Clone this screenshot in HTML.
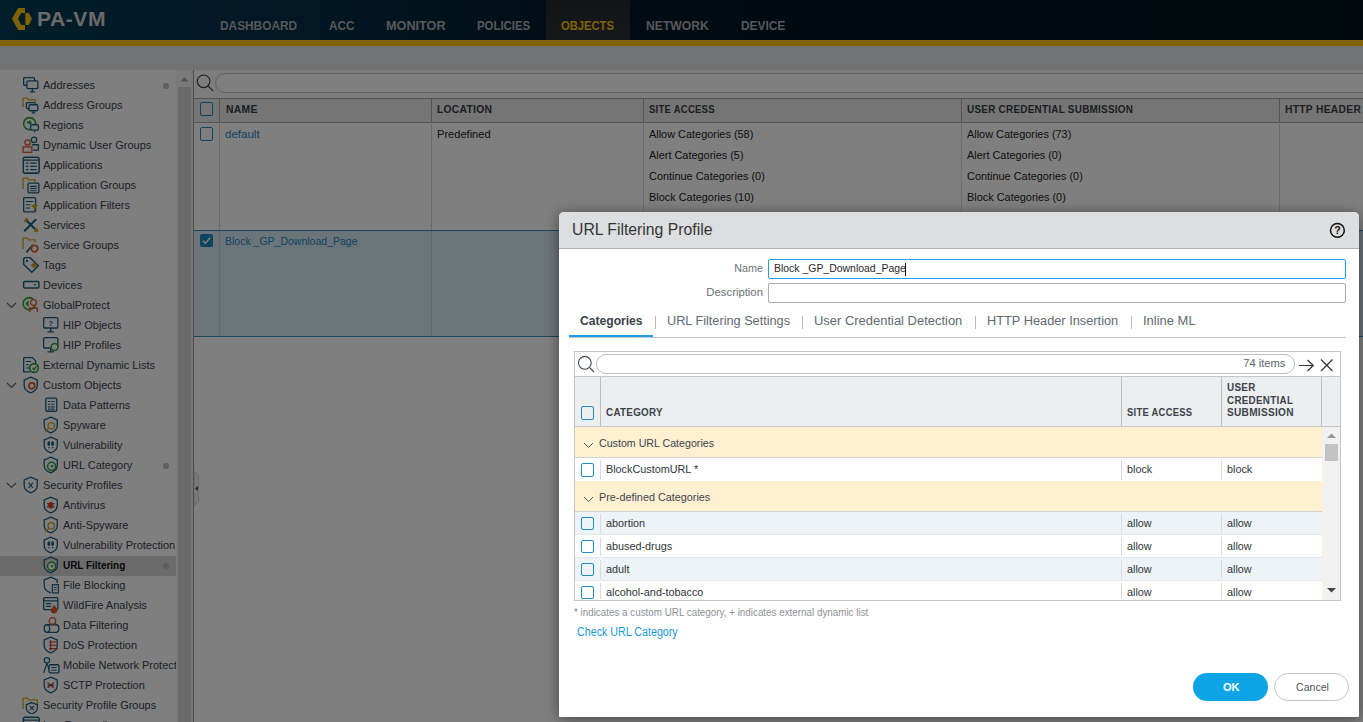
<!DOCTYPE html>
<html><head><meta charset="utf-8">
<style>
*{box-sizing:border-box;margin:0;padding:0}
html,body{width:1363px;height:722px;overflow:hidden;background:#fff;font-family:"Liberation Sans",sans-serif;color:#333;position:relative}
.abs{position:absolute}
.t{position:absolute;white-space:nowrap}
</style></head><body>
<div class="abs" style="left:0px;top:0px;width:1363px;height:40px;background:linear-gradient(90deg,#053a56 0%,#042d48 22%,#021a2a 42%,#011320 62%,#01111b 100%);"></div>
<div class="abs" style="left:546px;top:0px;width:84px;height:40px;background:linear-gradient(180deg,#252b31,#2c3238);"></div>
<svg class="abs" style="left:8px;top:4px" width="30" height="30" viewBox="0 0 30 30"><path d="M10.2 3.9H17v5H13.2L10 14.7l3.2 6.3H17v5H10.2L3.9 14.7z" fill="#ffc500"/><path d="M17.3 8.9h3.5l3.1 5.8-3.1 6.3h-3.5z" fill="#ffc500"/></svg>
<div class="t" style="left:37px;top:9.37px;font-size:20px;line-height:20px;font-weight:bold;color:#d4d4d4;letter-spacing:0.5px;transform:scaleX(1.0539);transform-origin:left top;">PA-VM</div>
<div class="t" style="left:220.2px;top:19.56px;font-size:12.8px;line-height:12.8px;font-weight:bold;color:#aeb1b5;transform:scaleX(0.9268);transform-origin:left top;">DASHBOARD</div>
<div class="t" style="left:328.8px;top:19.56px;font-size:12.8px;line-height:12.8px;font-weight:bold;color:#aeb1b5;transform:scaleX(0.9194);transform-origin:left top;">ACC</div>
<div class="t" style="left:385.6px;top:19.56px;font-size:12.8px;line-height:12.8px;font-weight:bold;color:#aeb1b5;transform:scaleX(0.9900);transform-origin:left top;">MONITOR</div>
<div class="t" style="left:476.7px;top:19.56px;font-size:12.8px;line-height:12.8px;font-weight:bold;color:#aeb1b5;transform:scaleX(0.8906);transform-origin:left top;">POLICIES</div>
<div class="t" style="left:561px;top:19.56px;font-size:12.8px;line-height:12.8px;font-weight:bold;color:#ffc300;transform:scaleX(0.8751);transform-origin:left top;">OBJECTS</div>
<div class="t" style="left:646px;top:19.56px;font-size:12.8px;line-height:12.8px;font-weight:bold;color:#aeb1b5;transform:scaleX(0.9515);transform-origin:left top;">NETWORK</div>
<div class="t" style="left:740.6px;top:19.56px;font-size:12.8px;line-height:12.8px;font-weight:bold;color:#aeb1b5;transform:scaleX(0.9296);transform-origin:left top;">DEVICE</div>
<div class="abs" style="left:0px;top:40px;width:1363px;height:6px;background:#ffc800;"></div>
<div class="abs" style="left:0px;top:46px;width:1363px;height:24px;background:#e2e5e8;"></div>
<div class="abs" style="left:0px;top:70px;width:177px;height:652px;background:#ffffff;"></div>
<div class="abs" style="left:0;top:0;width:176px;height:722px;overflow:hidden"><div class="abs" style="left:22px;top:76px;width:17px;height:17px"><svg width="18" height="18" viewBox="0 0 16.5 16.5" style="position:absolute"><rect x="1.5" y="1.5" width="10" height="7" rx="1" fill="none" stroke="#1b5f86" stroke-width="1.2"/><rect x="4.5" y="4.5" width="10" height="7" rx="1" fill="#fff" stroke="#1b5f86" stroke-width="1.2"/><path d="M9.5 11.5v3M7 14.5h5" stroke="#1b5f86" stroke-width="1.2"/></svg></div>
<div class="t" style="left:43px;top:80.23px;font-size:11.3px;line-height:11.3px;font-weight:normal;color:#3a4456;transform:scaleX(0.9750);transform-origin:left top;">Addresses</div>
<div class="abs" style="left:163px;top:83px;width:6px;height:6px;border-radius:3px;background:#bdbdbd"></div>
<div class="abs" style="left:22px;top:96px;width:17px;height:17px"><svg width="18" height="18" viewBox="0 0 16.5 16.5" style="position:absolute"><path d="M1 10V2h4l1 1.5h6V6" fill="none" stroke="#d9a21b" stroke-width="1.2"/><rect x="4" y="6" width="8" height="5.5" rx="1" fill="#fff" stroke="#1b5f86" stroke-width="1.2"/><rect x="6.5" y="8" width="8" height="5.5" rx="1" fill="#fff" stroke="#1b5f86" stroke-width="1.2"/><path d="M10.5 13.5v2M9 15.5h3" stroke="#1b5f86" stroke-width="1.1"/></svg></div>
<div class="t" style="left:43px;top:100.23px;font-size:11.3px;line-height:11.3px;font-weight:normal;color:#3a4456;transform:scaleX(0.9750);transform-origin:left top;">Address Groups</div>
<div class="abs" style="left:22px;top:116px;width:17px;height:17px"><svg width="18" height="18" viewBox="0 0 16.5 16.5" style="position:absolute"><circle cx="7" cy="7" r="5.5" fill="none" stroke="#2e9e3e" stroke-width="1.4"/><path d="M4 6l3-2 2 2-1 2z" fill="#2e9e3e"/><rect x="8" y="8" width="7" height="5" rx="1" fill="#fff" stroke="#1b5f86" stroke-width="1.2"/><path d="M11.5 13v2" stroke="#1b5f86" stroke-width="1.1"/></svg></div>
<div class="t" style="left:43px;top:120.23px;font-size:11.3px;line-height:11.3px;font-weight:normal;color:#3a4456;transform:scaleX(0.9750);transform-origin:left top;">Regions</div>
<div class="abs" style="left:22px;top:136px;width:17px;height:17px"><svg width="18" height="18" viewBox="0 0 16.5 16.5" style="position:absolute"><circle cx="5" cy="6" r="2.5" fill="none" stroke="#e0582a" stroke-width="1.2"/><rect x="1" y="10" width="8" height="5" fill="none" stroke="#e0582a" stroke-width="1.2"/><circle cx="11" cy="3.5" r="2.5" fill="none" stroke="#1b5f86" stroke-width="1.2"/><path d="M9 8h6v5h-5" fill="none" stroke="#1b5f86" stroke-width="1.2"/></svg></div>
<div class="t" style="left:43px;top:140.23px;font-size:11.3px;line-height:11.3px;font-weight:normal;color:#3a4456;transform:scaleX(0.9750);transform-origin:left top;">Dynamic User Groups</div>
<div class="abs" style="left:22px;top:156px;width:17px;height:17px"><svg width="18" height="18" viewBox="0 0 16.5 16.5" style="position:absolute"><rect x="1.2" y="1.2" width="14.5" height="14.5" rx="1.5" fill="none" stroke="#1b5f86" stroke-width="1.4"/><path d="M1.5 3.8h14M3.5 6.5h2.5M7.5 6.5h6M3.5 9.5h2.5M7.5 9.5h6M3.5 12.5h2.5M7.5 12.5h6" stroke="#1b5f86" stroke-width="1.3"/></svg></div>
<div class="t" style="left:43px;top:160.23px;font-size:11.3px;line-height:11.3px;font-weight:normal;color:#3a4456;transform:scaleX(0.9750);transform-origin:left top;">Applications</div>
<div class="abs" style="left:22px;top:176px;width:17px;height:17px"><svg width="18" height="18" viewBox="0 0 16.5 16.5" style="position:absolute"><path d="M1 12V2h4l1 1.5h6V6" fill="none" stroke="#d9a21b" stroke-width="1.2"/><rect x="5.5" y="6.5" width="10" height="9" rx="1" fill="#fff" stroke="#1b5f86" stroke-width="1.2"/><path d="M7.5 9.5h6M7.5 11.5h6M7.5 13.5h6" stroke="#1b5f86" stroke-width="1"/></svg></div>
<div class="t" style="left:43px;top:180.23px;font-size:11.3px;line-height:11.3px;font-weight:normal;color:#3a4456;transform:scaleX(0.9750);transform-origin:left top;">Application Groups</div>
<div class="abs" style="left:22px;top:196px;width:17px;height:17px"><svg width="18" height="18" viewBox="0 0 16.5 16.5" style="position:absolute"><rect x="1.5" y="1.5" width="11" height="13" rx="1" fill="none" stroke="#1b5f86" stroke-width="1.2"/><path d="M3.5 5h7M3.5 8h4M3.5 11h4" stroke="#1b5f86" stroke-width="1"/><path d="M8 8h7l-3 3.5V15l-1-1v-2.5z" fill="#d9a21b"/></svg></div>
<div class="t" style="left:43px;top:200.23px;font-size:11.3px;line-height:11.3px;font-weight:normal;color:#3a4456;transform:scaleX(0.9750);transform-origin:left top;">Application Filters</div>
<div class="abs" style="left:22px;top:216px;width:17px;height:17px"><svg width="18" height="18" viewBox="0 0 16.5 16.5" style="position:absolute"><path d="M2 14L13 3M3 3l11 11" stroke="#1b5f86" stroke-width="1.8"/><path d="M1.5 4.5l3-3 1.5 1.5-3 3z" fill="#d9a21b"/><circle cx="13" cy="13" r="2" fill="#d9a21b"/></svg></div>
<div class="t" style="left:43px;top:220.23px;font-size:11.3px;line-height:11.3px;font-weight:normal;color:#3a4456;transform:scaleX(0.9750);transform-origin:left top;">Services</div>
<div class="abs" style="left:22px;top:236px;width:17px;height:17px"><svg width="18" height="18" viewBox="0 0 16.5 16.5" style="position:absolute"><path d="M1 12V2h4l1 1.5h6V6" fill="none" stroke="#d9a21b" stroke-width="1.2"/><path d="M4 15l6-7" stroke="#1b5f86" stroke-width="1.5"/><circle cx="11.5" cy="11.5" r="3" fill="none" stroke="#e0582a" stroke-width="1.6"/></svg></div>
<div class="t" style="left:43px;top:240.23px;font-size:11.3px;line-height:11.3px;font-weight:normal;color:#3a4456;transform:scaleX(0.9750);transform-origin:left top;">Service Groups</div>
<div class="abs" style="left:22px;top:256px;width:17px;height:17px"><svg width="18" height="18" viewBox="0 0 16.5 16.5" style="position:absolute"><path d="M1.5 2.5v5l7.5 7.5 6-6L7.5 1.5h-5z" fill="none" stroke="#1b5f86" stroke-width="1.3"/><path d="M8 8.5l3 3 3-3-3-3z" fill="#d9a21b"/><circle cx="4.5" cy="4.5" r="1" fill="#1b5f86"/></svg></div>
<div class="t" style="left:43px;top:260.23px;font-size:11.3px;line-height:11.3px;font-weight:normal;color:#3a4456;transform:scaleX(0.9750);transform-origin:left top;">Tags</div>
<div class="abs" style="left:22px;top:276px;width:17px;height:17px"><svg width="18" height="18" viewBox="0 0 16.5 16.5" style="position:absolute"><rect x="1.5" y="5" width="14" height="6" rx="1" fill="none" stroke="#1b5f86" stroke-width="1.3"/><path d="M11 8h2" stroke="#2e9e3e" stroke-width="1.2"/></svg></div>
<div class="t" style="left:43px;top:280.23px;font-size:11.3px;line-height:11.3px;font-weight:normal;color:#3a4456;transform:scaleX(0.9750);transform-origin:left top;">Devices</div>
<svg class="abs" style="left:6px;top:302px" width="11" height="7" viewBox="0 0 11 7"><path d="M1 1l4.5 4.5L10 1" fill="none" stroke="#666" stroke-width="1.1"/></svg>
<div class="abs" style="left:22px;top:296px;width:17px;height:17px"><svg width="18" height="18" viewBox="0 0 16.5 16.5" style="position:absolute"><circle cx="6.5" cy="7" r="5.5" fill="none" stroke="#2e9e3e" stroke-width="1.4"/><path d="M3 7l3-3v6z" fill="#2e9e3e"/><circle cx="10.5" cy="6" r="2.7" fill="#fff" stroke="#e0582a" stroke-width="1.2"/><path d="M7 15v-4h7v4" fill="none" stroke="#e0582a" stroke-width="1.2"/></svg></div>
<div class="t" style="left:43px;top:300.23px;font-size:11.3px;line-height:11.3px;font-weight:normal;color:#3a4456;transform:scaleX(0.9750);transform-origin:left top;">GlobalProtect</div>
<div class="abs" style="left:42px;top:316px;width:17px;height:17px"><svg width="18" height="18" viewBox="0 0 16.5 16.5" style="position:absolute"><rect x="1.5" y="1.5" width="13" height="9.5" rx="1" fill="none" stroke="#1b5f86" stroke-width="1.2"/><text x="6" y="9" font-size="7" font-family="Liberation Sans" fill="#1b5f86" font-weight="bold">?</text><path d="M8 11v3M5 14.5h6" stroke="#1b5f86" stroke-width="1.2"/></svg></div>
<div class="t" style="left:63px;top:320.23px;font-size:11.3px;line-height:11.3px;font-weight:normal;color:#3a4456;transform:scaleX(0.9750);transform-origin:left top;">HIP Objects</div>
<div class="abs" style="left:42px;top:336px;width:17px;height:17px"><svg width="18" height="18" viewBox="0 0 16.5 16.5" style="position:absolute"><rect x="1.5" y="1.5" width="13" height="9.5" rx="1" fill="none" stroke="#1b5f86" stroke-width="1.2"/><path d="M8 11v3M5 14.5h6" stroke="#1b5f86" stroke-width="1.2"/><circle cx="11.5" cy="10" r="3.2" fill="#fff" stroke="#2e9e3e" stroke-width="1.3"/></svg></div>
<div class="t" style="left:63px;top:340.23px;font-size:11.3px;line-height:11.3px;font-weight:normal;color:#3a4456;transform:scaleX(0.9750);transform-origin:left top;">HIP Profiles</div>
<div class="abs" style="left:22px;top:356px;width:17px;height:17px"><svg width="18" height="18" viewBox="0 0 16.5 16.5" style="position:absolute"><path d="M1.5 1.5h8l3 3V8M1.5 1.5v13h6" fill="none" stroke="#1b5f86" stroke-width="1.2"/><path d="M3.5 5h5M3.5 8h3M3.5 11h3" stroke="#1b5f86" stroke-width="1"/><circle cx="11" cy="11" r="4" fill="#fff" stroke="#2e9e3e" stroke-width="1.5"/><path d="M9.5 11l1.5 1.5 2-3" stroke="#2e9e3e" stroke-width="1.2" fill="none"/></svg></div>
<div class="t" style="left:43px;top:360.23px;font-size:11.3px;line-height:11.3px;font-weight:normal;color:#3a4456;transform:scaleX(0.9750);transform-origin:left top;">External Dynamic Lists</div>
<svg class="abs" style="left:6px;top:382px" width="11" height="7" viewBox="0 0 11 7"><path d="M1 1l4.5 4.5L10 1" fill="none" stroke="#666" stroke-width="1.1"/></svg>
<div class="abs" style="left:22px;top:376px;width:17px;height:17px"><svg width="18" height="18" viewBox="0 0 16.5 16.5" style="position:absolute"><path d="M8 1l6 2.5v5C14 12 11 14.5 8 15.5 5 14.5 2 12 2 8.5v-5z" fill="none" stroke="#1b5f86" stroke-width="1.2"/><circle cx="9" cy="9" r="2.7" fill="none" stroke="#e0582a" stroke-width="1.6"/></svg></div>
<div class="t" style="left:43px;top:380.23px;font-size:11.3px;line-height:11.3px;font-weight:normal;color:#3a4456;transform:scaleX(0.9750);transform-origin:left top;">Custom Objects</div>
<div class="abs" style="left:42px;top:396px;width:17px;height:17px"><svg width="18" height="18" viewBox="0 0 16.5 16.5" style="position:absolute"><rect x="3.5" y="2" width="10" height="12" rx="1" fill="none" stroke="#1b5f86" stroke-width="1.2"/><path d="M5.5 5h6M5.5 7.5h6M5.5 10h6M5.5 12h6" stroke="#1b5f86" stroke-width="1"/><path d="M8 4.5v8" stroke="#fff" stroke-width="0.7"/></svg></div>
<div class="t" style="left:63px;top:400.23px;font-size:11.3px;line-height:11.3px;font-weight:normal;color:#3a4456;transform:scaleX(0.9750);transform-origin:left top;">Data Patterns</div>
<div class="abs" style="left:42px;top:416px;width:17px;height:17px"><svg width="18" height="18" viewBox="0 0 16.5 16.5" style="position:absolute"><path d="M8 1l6 2.5v5C14 12 11 14.5 8 15.5 5 14.5 2 12 2 8.5v-5z" fill="none" stroke="#1b5f86" stroke-width="1.2"/><circle cx="8.5" cy="9" r="3" fill="none" stroke="#d9a21b" stroke-width="1.2"/><path d="M6.3 11.2L3 14.5" stroke="#d9a21b" stroke-width="1.2"/></svg></div>
<div class="t" style="left:63px;top:420.23px;font-size:11.3px;line-height:11.3px;font-weight:normal;color:#3a4456;transform:scaleX(0.9750);transform-origin:left top;">Spyware</div>
<div class="abs" style="left:42px;top:436px;width:17px;height:17px"><svg width="18" height="18" viewBox="0 0 16.5 16.5" style="position:absolute"><path d="M8 1l6 2.5v5C14 12 11 14.5 8 15.5 5 14.5 2 12 2 8.5v-5z" fill="none" stroke="#1b5f86" stroke-width="1.2"/><ellipse cx="6.3" cy="7" rx="1.3" ry="2.1" fill="#1b5f86"/><ellipse cx="9.7" cy="7" rx="1.3" ry="2.1" fill="#1b5f86"/><path d="M5.8 10.6h1.2M9.2 10.6h1.2" stroke="#1b5f86" stroke-width="1.2"/></svg></div>
<div class="t" style="left:63px;top:440.23px;font-size:11.3px;line-height:11.3px;font-weight:normal;color:#3a4456;transform:scaleX(0.9750);transform-origin:left top;">Vulnerability</div>
<div class="abs" style="left:42px;top:456px;width:17px;height:17px"><svg width="18" height="18" viewBox="0 0 16.5 16.5" style="position:absolute"><path d="M8 1l6 2.5v5C14 12 11 14.5 8 15.5 5 14.5 2 12 2 8.5v-5z" fill="none" stroke="#1b5f86" stroke-width="1.2"/><circle cx="8.8" cy="9.5" r="3.7" fill="#fff" stroke="#2e9e3e" stroke-width="1.4"/><path d="M7.5 9l2 2 1-3z" fill="#2e9e3e"/></svg></div>
<div class="t" style="left:63px;top:460.23px;font-size:11.3px;line-height:11.3px;font-weight:normal;color:#3a4456;transform:scaleX(0.9750);transform-origin:left top;">URL Category</div>
<div class="abs" style="left:163px;top:463px;width:6px;height:6px;border-radius:3px;background:#bdbdbd"></div>
<svg class="abs" style="left:6px;top:482px" width="11" height="7" viewBox="0 0 11 7"><path d="M1 1l4.5 4.5L10 1" fill="none" stroke="#666" stroke-width="1.1"/></svg>
<div class="abs" style="left:22px;top:476px;width:17px;height:17px"><svg width="18" height="18" viewBox="0 0 16.5 16.5" style="position:absolute"><path d="M8 1l6 2.5v5C14 12 11 14.5 8 15.5 5 14.5 2 12 2 8.5v-5z" fill="none" stroke="#1b5f86" stroke-width="1.2"/><path d="M6 6l4 5M10 6l-4 5" stroke="#1b5f86" stroke-width="1.1"/></svg></div>
<div class="t" style="left:43px;top:480.23px;font-size:11.3px;line-height:11.3px;font-weight:normal;color:#3a4456;transform:scaleX(0.9750);transform-origin:left top;">Security Profiles</div>
<div class="abs" style="left:42px;top:496px;width:17px;height:17px"><svg width="18" height="18" viewBox="0 0 16.5 16.5" style="position:absolute"><path d="M8 1l6 2.5v5C14 12 11 14.5 8 15.5 5 14.5 2 12 2 8.5v-5z" fill="none" stroke="#1b5f86" stroke-width="1.2"/><ellipse cx="8" cy="8.5" rx="2.3" ry="3" fill="#d0402a"/><path d="M4.5 7h7M4.5 10h7" stroke="#d0402a" stroke-width="1"/></svg></div>
<div class="t" style="left:63px;top:500.23px;font-size:11.3px;line-height:11.3px;font-weight:normal;color:#3a4456;transform:scaleX(0.9750);transform-origin:left top;">Antivirus</div>
<div class="abs" style="left:42px;top:516px;width:17px;height:17px"><svg width="18" height="18" viewBox="0 0 16.5 16.5" style="position:absolute"><path d="M8 1l6 2.5v5C14 12 11 14.5 8 15.5 5 14.5 2 12 2 8.5v-5z" fill="none" stroke="#1b5f86" stroke-width="1.2"/><circle cx="8.5" cy="9" r="3" fill="none" stroke="#d9a21b" stroke-width="1.2"/><path d="M6.3 11.2L3 14.5" stroke="#d9a21b" stroke-width="1.2"/></svg></div>
<div class="t" style="left:63px;top:520.23px;font-size:11.3px;line-height:11.3px;font-weight:normal;color:#3a4456;transform:scaleX(0.9750);transform-origin:left top;">Anti-Spyware</div>
<div class="abs" style="left:42px;top:536px;width:17px;height:17px"><svg width="18" height="18" viewBox="0 0 16.5 16.5" style="position:absolute"><path d="M8 1l6 2.5v5C14 12 11 14.5 8 15.5 5 14.5 2 12 2 8.5v-5z" fill="none" stroke="#1b5f86" stroke-width="1.2"/><ellipse cx="6.3" cy="7" rx="1.3" ry="2.1" fill="#1b5f86"/><ellipse cx="9.7" cy="7" rx="1.3" ry="2.1" fill="#1b5f86"/><path d="M5.8 10.6h1.2M9.2 10.6h1.2" stroke="#1b5f86" stroke-width="1.2"/></svg></div>
<div class="t" style="left:63px;top:540.23px;font-size:11.3px;line-height:11.3px;font-weight:normal;color:#3a4456;transform:scaleX(0.9750);transform-origin:left top;">Vulnerability Protection</div>
<div class="abs" style="left:0px;top:556px;width:176px;height:20px;background:#d7d7d7;"></div>
<div class="abs" style="left:42px;top:556px;width:17px;height:17px"><svg width="18" height="18" viewBox="0 0 16.5 16.5" style="position:absolute"><path d="M8 1l6 2.5v5C14 12 11 14.5 8 15.5 5 14.5 2 12 2 8.5v-5z" fill="none" stroke="#1b5f86" stroke-width="1.2"/><circle cx="8.8" cy="9.5" r="3.7" fill="#fff" stroke="#2e9e3e" stroke-width="1.4"/><path d="M7.5 9l2 2 1-3z" fill="#2e9e3e"/></svg></div>
<div class="t" style="left:63px;top:560.23px;font-size:11.3px;line-height:11.3px;font-weight:bold;color:#111;transform:scaleX(0.8800);transform-origin:left top;">URL Filtering</div>
<div class="abs" style="left:163px;top:563px;width:6px;height:6px;border-radius:3px;background:#bdbdbd"></div>
<div class="abs" style="left:42px;top:576px;width:17px;height:17px"><svg width="18" height="18" viewBox="0 0 16.5 16.5" style="position:absolute"><path d="M8 1l6 2.5v3M8 15.5C5 14.5 2 12 2 8.5v-5L8 1" fill="none" stroke="#1b5f86" stroke-width="1.2"/><rect x="9.5" y="8" width="5.5" height="7.5" fill="#fff" stroke="#1b5f86" stroke-width="1.1"/><path d="M11 10.5h2.5M11 12.5h2.5" stroke="#1b5f86" stroke-width="0.8"/></svg></div>
<div class="t" style="left:63px;top:580.23px;font-size:11.3px;line-height:11.3px;font-weight:normal;color:#3a4456;transform:scaleX(0.9750);transform-origin:left top;">File Blocking</div>
<div class="abs" style="left:42px;top:596px;width:17px;height:17px"><svg width="18" height="18" viewBox="0 0 16.5 16.5" style="position:absolute"><rect x="1.5" y="1.5" width="13" height="11" rx="1" fill="none" stroke="#1b5f86" stroke-width="1.2"/><path d="M1.5 4.5h13M3.5 7h5M3.5 9.5h5" stroke="#1b5f86" stroke-width="1"/><path d="M11 16c-2.5 0-3.5-2-2.5-4s2-2 2-4c2 1.5 3.5 3 3.5 5s-1 3-3 3z" fill="#e0582a"/></svg></div>
<div class="t" style="left:63px;top:600.23px;font-size:11.3px;line-height:11.3px;font-weight:normal;color:#3a4456;transform:scaleX(0.9750);transform-origin:left top;">WildFire Analysis</div>
<div class="abs" style="left:42px;top:616px;width:17px;height:17px"><svg width="18" height="18" viewBox="0 0 16.5 16.5" style="position:absolute"><ellipse cx="4.5" cy="11.5" rx="2.5" ry="3.5" fill="none" stroke="#1b5f86" stroke-width="1.2"/><path d="M4.5 8h8.5a2.5 3.5 0 0 1 0 7H4.5" fill="none" stroke="#1b5f86" stroke-width="1.2"/><circle cx="9.5" cy="4.5" r="3" fill="#fff" stroke="#e0582a" stroke-width="1.2"/><path d="M11.5 6.5l2 2" stroke="#e0582a" stroke-width="1.2"/></svg></div>
<div class="t" style="left:63px;top:620.23px;font-size:11.3px;line-height:11.3px;font-weight:normal;color:#3a4456;transform:scaleX(0.9750);transform-origin:left top;">Data Filtering</div>
<div class="abs" style="left:42px;top:636px;width:17px;height:17px"><svg width="18" height="18" viewBox="0 0 16.5 16.5" style="position:absolute"><path d="M8 1l6 2.5v5C14 12 11 14.5 8 15.5 5 14.5 2 12 2 8.5v-5z" fill="none" stroke="#1b5f86" stroke-width="1.2"/><path d="M6.5 5.5h8M6.5 8.5h8M6.5 11.5h8" stroke="#d0402a" stroke-width="1.1"/><path d="M8 4v9" stroke="#d0402a" stroke-width="1.1"/></svg></div>
<div class="t" style="left:63px;top:640.23px;font-size:11.3px;line-height:11.3px;font-weight:normal;color:#3a4456;transform:scaleX(0.9750);transform-origin:left top;">DoS Protection</div>
<div class="abs" style="left:42px;top:656px;width:17px;height:17px"><svg width="18" height="18" viewBox="0 0 16.5 16.5" style="position:absolute"><circle cx="4.5" cy="4" r="2.5" fill="none" stroke="#1b5f86" stroke-width="1.1"/><path d="M4.5 6.5L1.5 15.5M4.5 6.5l3 9" stroke="#1b5f86" stroke-width="1.1"/><rect x="6.5" y="8" width="9" height="7.5" rx="1" fill="#fff" stroke="#1b5f86" stroke-width="1.2"/><path d="M8.5 10.5h5M8.5 13h5" stroke="#1b5f86" stroke-width="0.9"/></svg></div>
<div class="t" style="left:63px;top:660.23px;font-size:11.3px;line-height:11.3px;font-weight:normal;color:#3a4456;transform:scaleX(0.9750);transform-origin:left top;">Mobile Network Protection</div>
<div class="abs" style="left:42px;top:676px;width:17px;height:17px"><svg width="18" height="18" viewBox="0 0 16.5 16.5" style="position:absolute"><path d="M8 1l6 2.5v5C14 12 11 14.5 8 15.5 5 14.5 2 12 2 8.5v-5z" fill="none" stroke="#1b5f86" stroke-width="1.2"/><path d="M5 6l6 5M11 6l-6 5" stroke="#d0402a" stroke-width="1.2"/><path d="M5 8.5h6" stroke="#1b5f86" stroke-width="1.1"/></svg></div>
<div class="t" style="left:63px;top:680.23px;font-size:11.3px;line-height:11.3px;font-weight:normal;color:#3a4456;transform:scaleX(0.9750);transform-origin:left top;">SCTP Protection</div>
<div class="abs" style="left:22px;top:696px;width:17px;height:17px"><svg width="18" height="18" viewBox="0 0 16.5 16.5" style="position:absolute"><path d="M1 12V2h4l1 1.5h8v6" fill="none" stroke="#d9a21b" stroke-width="1.2"/><path d="M9 6l5 2v4c0 2-2.5 3.5-5 4.5-2.5-1-5-2.5-5-4.5V8z" fill="#fff" stroke="#1b5f86" stroke-width="1.2"/><path d="M7 9l4 4M11 9l-4 4" stroke="#1b5f86" stroke-width="1"/></svg></div>
<div class="t" style="left:43px;top:700.23px;font-size:11.3px;line-height:11.3px;font-weight:normal;color:#3a4456;transform:scaleX(0.9750);transform-origin:left top;">Security Profile Groups</div>
<div class="abs" style="left:22px;top:716px;width:17px;height:17px"><svg width="18" height="18" viewBox="0 0 16.5 16.5" style="position:absolute"><rect x="1.2" y="1.2" width="14.5" height="14.5" rx="1.5" fill="none" stroke="#1b5f86" stroke-width="1.4"/><path d="M1.5 3.8h14M3.5 6.5h2.5M7.5 6.5h6M3.5 9.5h2.5M7.5 9.5h6M3.5 12.5h2.5M7.5 12.5h6" stroke="#1b5f86" stroke-width="1.3"/></svg></div>
<div class="t" style="left:43px;top:720.23px;font-size:11.3px;line-height:11.3px;font-weight:normal;color:#3a4456;transform:scaleX(0.9750);transform-origin:left top;">Log Forwarding</div></div>
<div class="abs" style="left:176px;top:70px;width:17px;height:652px;background:#f5f5f5;"></div>
<svg class="abs" style="left:180px;top:76px" width="9" height="6"><path d="M0.5 5.5L4.5 1l4 4.5z" fill="#a8a8a8"/></svg>
<div class="abs" style="left:178px;top:87px;width:13px;height:635px;background:#d2d2d2;"></div>
<div class="abs" style="left:191px;top:70px;width:2px;height:652px;background:#eeeeee;"></div>
<div class="abs" style="left:193px;top:70px;width:1px;height:652px;background:#9a9a9a;"></div>
<div class="abs" style="left:194px;top:70px;width:1169px;height:652px;background:#ffffff;"></div>
<div class="abs" style="left:194px;top:70px;width:1169px;height:28px;background:#fafafa;"></div>
<svg class="abs" style="left:195px;top:73px" width="22" height="22"><circle cx="8.6" cy="8.3" r="6.3" fill="none" stroke="#3d3d3d" stroke-width="1.1"/><path d="M13 12.8l5.2 5.4" stroke="#3d3d3d" stroke-width="1.1"/></svg>
<div class="abs" style="left:215px;top:73px;width:1200px;height:20px;background:#fff;border:1px solid #c9c9c9;border-radius:10px"></div>
<div class="abs" style="left:194px;top:98px;width:1169px;height:25px;background:#eaebec;border-top:1px solid #a6a9ad;border-bottom:1px solid #a6a9ad"></div>
<div class="abs" style="left:219px;top:98px;width:1px;height:25px;background:#a9a9a9;"></div>
<div class="abs" style="left:431px;top:98px;width:1px;height:25px;background:#a9a9a9;"></div>
<div class="abs" style="left:643px;top:98px;width:1px;height:25px;background:#a9a9a9;"></div>
<div class="abs" style="left:961px;top:98px;width:1px;height:25px;background:#a9a9a9;"></div>
<div class="abs" style="left:1279px;top:98px;width:1px;height:25px;background:#a9a9a9;"></div>
<div class="abs" style="left:200px;top:102px;width:13px;height:13.5px;border:1.8px solid #1b8bc3;border-radius:2px"></div>
<div class="t" style="left:225.5px;top:104.33px;font-size:10.6px;line-height:10.6px;font-weight:bold;color:#383c42;letter-spacing:0.3px;transform:scaleX(0.9782);transform-origin:left top;">NAME</div>
<div class="t" style="left:437.3px;top:104.33px;font-size:10.6px;line-height:10.6px;font-weight:bold;color:#383c42;letter-spacing:0.3px;transform:scaleX(0.9695);transform-origin:left top;">LOCATION</div>
<div class="t" style="left:648.8px;top:104.33px;font-size:10.6px;line-height:10.6px;font-weight:bold;color:#383c42;letter-spacing:0.3px;transform:scaleX(0.8947);transform-origin:left top;">SITE ACCESS</div>
<div class="t" style="left:966.9px;top:104.33px;font-size:10.6px;line-height:10.6px;font-weight:bold;color:#383c42;letter-spacing:0.3px;transform:scaleX(0.9321);transform-origin:left top;">USER CREDENTIAL SUBMISSION</div>
<div class="t" style="left:1285px;top:104.33px;font-size:10.6px;line-height:10.6px;font-weight:bold;color:#383c42;letter-spacing:0.3px;transform:scaleX(0.9700);transform-origin:left top;">HTTP HEADER INSERTION</div>
<div class="abs" style="left:219px;top:124px;width:1px;height:106px;background:#d9d9d9;"></div>
<div class="abs" style="left:431px;top:124px;width:1px;height:106px;background:#d9d9d9;"></div>
<div class="abs" style="left:643px;top:124px;width:1px;height:106px;background:#d9d9d9;"></div>
<div class="abs" style="left:961px;top:124px;width:1px;height:106px;background:#d9d9d9;"></div>
<div class="abs" style="left:1279px;top:124px;width:1px;height:106px;background:#d9d9d9;"></div>
<div class="abs" style="left:200px;top:127px;width:13px;height:13.5px;border:1.8px solid #1b8bc3;border-radius:2px"></div>
<div class="t" style="left:225px;top:128.52px;font-size:11.2px;line-height:11.2px;font-weight:normal;color:#1a86c8;transform:scaleX(1.0300);transform-origin:left top;">default</div>
<div class="t" style="left:437px;top:128.52px;font-size:11.2px;line-height:11.2px;font-weight:normal;color:#222;transform:scaleX(0.9900);transform-origin:left top;">Predefined</div>
<div class="t" style="left:649px;top:128.52px;font-size:11.2px;line-height:11.2px;font-weight:normal;color:#222;transform:scaleX(0.9750);transform-origin:left top;">Allow Categories (58)</div>
<div class="t" style="left:649px;top:149.52px;font-size:11.2px;line-height:11.2px;font-weight:normal;color:#222;transform:scaleX(0.9750);transform-origin:left top;">Alert Categories (5)</div>
<div class="t" style="left:649px;top:170.52px;font-size:11.2px;line-height:11.2px;font-weight:normal;color:#222;transform:scaleX(0.9750);transform-origin:left top;">Continue Categories (0)</div>
<div class="t" style="left:649px;top:191.52px;font-size:11.2px;line-height:11.2px;font-weight:normal;color:#222;transform:scaleX(0.9750);transform-origin:left top;">Block Categories (10)</div>
<div class="t" style="left:967px;top:128.52px;font-size:11.2px;line-height:11.2px;font-weight:normal;color:#222;transform:scaleX(0.9750);transform-origin:left top;">Allow Categories (73)</div>
<div class="t" style="left:967px;top:149.52px;font-size:11.2px;line-height:11.2px;font-weight:normal;color:#222;transform:scaleX(0.9750);transform-origin:left top;">Alert Categories (0)</div>
<div class="t" style="left:967px;top:170.52px;font-size:11.2px;line-height:11.2px;font-weight:normal;color:#222;transform:scaleX(0.9750);transform-origin:left top;">Continue Categories (0)</div>
<div class="t" style="left:967px;top:191.52px;font-size:11.2px;line-height:11.2px;font-weight:normal;color:#222;transform:scaleX(0.9750);transform-origin:left top;">Block Categories (0)</div>
<div class="abs" style="left:194px;top:230px;width:1169px;height:107px;background:#d7e9f3;border-top:1px solid #3b8fc0;border-bottom:1px solid #3b8fc0"></div>
<div class="abs" style="left:219px;top:231px;width:1px;height:105px;background:#c2d3dc;"></div>
<div class="abs" style="left:431px;top:231px;width:1px;height:105px;background:#c2d3dc;"></div>
<div class="abs" style="left:643px;top:231px;width:1px;height:105px;background:#c2d3dc;"></div>
<div class="abs" style="left:961px;top:231px;width:1px;height:105px;background:#c2d3dc;"></div>
<div class="abs" style="left:1279px;top:231px;width:1px;height:105px;background:#c2d3dc;"></div>
<div class="abs" style="left:200px;top:234px;width:13px;height:13px;border-radius:2px;background:#1b8bc3"><svg width="13" height="13" style="position:absolute;left:0;top:0"><path d="M3 6.8l2.4 2.4L10.2 3.8" fill="none" stroke="#fff" stroke-width="1.5"/></svg></div>
<div class="t" style="left:225px;top:235.52px;font-size:11.2px;line-height:11.2px;font-weight:normal;color:#1a86c8;transform:scaleX(0.9385);transform-origin:left top;">Block _GP_Download_Page</div>
<svg class="abs" style="left:194px;top:470px" width="6" height="37"><path d="M0 1L4.5 6v25L0 36z" fill="#f2f2f2" stroke="#c8c8c8" stroke-width="0.8"/><path d="M1 18.5l3-2.6v5.2z" fill="#555"/></svg>
<div class="abs" style="left:0px;top:0px;width:1363px;height:722px;background:rgba(0,0,0,0.5);"></div>
<div class="abs" style="left:559px;top:212px;width:800px;height:505px;background:#ffffff;border-radius:5px 5px 1px 1px;box-shadow:0 2px 14px rgba(0,0,0,0.45)"></div>
<div class="abs" style="left:559px;top:212px;width:800px;height:37px;background:#dcdee0;border-radius:5px 5px 0 0;border-bottom:1px solid #adb1b5"></div>
<div class="t" style="left:571.7px;top:221.09px;font-size:16.2px;line-height:16.2px;font-weight:normal;color:#363636;transform:scaleX(0.9734);transform-origin:left top;">URL Filtering Profile</div>
<svg class="abs" style="left:1328px;top:221px" width="19" height="19" viewBox="0 0 19 19"><circle cx="9.4" cy="9.4" r="6.9" fill="none" stroke="#111" stroke-width="1.5"/><text x="9.4" y="13.2" text-anchor="middle" font-family="Liberation Sans" font-weight="bold" font-size="10.5" fill="#111">?</text></svg>
<div class="t" style="right:600.5px;top:262.82px;font-size:11.2px;line-height:11.2px;font-weight:normal;color:#6b7278;transform:scaleX(0.9583);transform-origin:right top;">Name</div>
<div class="t" style="right:600.5px;top:286.82px;font-size:11.2px;line-height:11.2px;font-weight:normal;color:#6b7278;transform:scaleX(1.0113);transform-origin:right top;">Description</div>
<div class="abs" style="left:768px;top:259px;width:578px;height:20px;background:#fff;border:1.5px solid #17a1e6;border-radius:2px"></div>
<div class="t" style="left:773.6px;top:262.52px;font-size:11.2px;line-height:11.2px;font-weight:normal;color:#2a2a2a;transform:scaleX(0.9342);transform-origin:left top;">Block _GP_Download_Page</div>
<div class="abs" style="left:905px;top:262.5px;width:1px;height:13px;background:#111;"></div>
<div class="abs" style="left:768px;top:283px;width:578px;height:20px;background:#fff;border:1px solid #a7adb2;border-radius:2px"></div>
<div class="abs" style="left:569px;top:337px;width:777px;height:1px;background:#c5c8cb;"></div>
<div class="abs" style="left:569px;top:335px;width:84px;height:2px;background:#1aa0e0;"></div>
<div class="t" style="left:580.3px;top:313.83px;font-size:13.2px;line-height:13.2px;font-weight:bold;color:#3b434b;transform:scaleX(0.9183);transform-origin:left top;">Categories</div>
<div class="t" style="left:666.7px;top:313.83px;font-size:13.2px;line-height:13.2px;font-weight:normal;color:#5f6971;transform:scaleX(0.9626);transform-origin:left top;">URL Filtering Settings</div>
<div class="t" style="left:814px;top:313.83px;font-size:13.2px;line-height:13.2px;font-weight:normal;color:#5f6971;transform:scaleX(0.9821);transform-origin:left top;">User Credential Detection</div>
<div class="t" style="left:986.6px;top:313.83px;font-size:13.2px;line-height:13.2px;font-weight:normal;color:#5f6971;transform:scaleX(0.9693);transform-origin:left top;">HTTP Header Insertion</div>
<div class="t" style="left:1142.5px;top:313.83px;font-size:13.2px;line-height:13.2px;font-weight:normal;color:#5f6971;transform:scaleX(0.9829);transform-origin:left top;">Inline ML</div>
<div class="abs" style="left:655px;top:316px;width:1px;height:13px;background:#b5babe;"></div>
<div class="abs" style="left:802px;top:316px;width:1px;height:13px;background:#b5babe;"></div>
<div class="abs" style="left:975px;top:316px;width:1px;height:13px;background:#b5babe;"></div>
<div class="abs" style="left:1131px;top:316px;width:1px;height:13px;background:#b5babe;"></div>
<div class="abs" style="left:574px;top:351px;width:767px;height:250px;background:#fff;border:1px solid #c3c7cb"></div>
<svg class="abs" style="left:575px;top:353px" width="22" height="22"><circle cx="9.8" cy="9.8" r="6.4" fill="none" stroke="#3d4650" stroke-width="1.1"/><path d="M14.4 14.4l4.6 4.6" stroke="#3d4650" stroke-width="1.1"/></svg>
<div class="abs" style="left:596px;top:354px;width:699px;height:20px;background:#fff;border:1px solid #b9bec2;border-radius:10px"></div>
<div class="t" style="right:78.20000000000005px;top:357.52px;font-size:11.2px;line-height:11.2px;font-weight:normal;color:#5d656c;transform:scaleX(0.9957);transform-origin:right top;">74 items</div>
<svg class="abs" style="left:1297px;top:357px" width="40" height="16"><path d="M2 8.5h14M10.5 3l5.8 5.5-5.8 5.5" fill="none" stroke="#333" stroke-width="1.2"/><path d="M24 2.5l11.5 11.5M35.5 2.5L24 14" fill="none" stroke="#333" stroke-width="1.2"/></svg>
<div class="abs" style="left:575px;top:376px;width:765px;height:1px;background:#c3c7cb;"></div>
<div class="abs" style="left:575px;top:377px;width:765px;height:49px;background:#eceeef;"></div>
<div class="abs" style="left:575px;top:426px;width:765px;height:1px;background:#c3c7cb;"></div>
<div class="abs" style="left:600px;top:377px;width:1px;height:49px;background:#b9bec2;"></div>
<div class="abs" style="left:1121px;top:377px;width:1px;height:49px;background:#b9bec2;"></div>
<div class="abs" style="left:1221px;top:377px;width:1px;height:49px;background:#b9bec2;"></div>
<div class="abs" style="left:1321px;top:377px;width:1px;height:49px;background:#b9bec2;"></div>
<div class="abs" style="left:581px;top:406px;width:13px;height:13.5px;border:1.8px solid #1b8bc3;border-radius:2px"></div>
<div class="t" style="left:606.3px;top:408.34px;font-size:10px;line-height:10px;font-weight:bold;color:#3b434b;letter-spacing:0.3px;transform:scaleX(0.9816);transform-origin:left top;">CATEGORY</div>
<div class="t" style="left:1127.2px;top:408.34px;font-size:10px;line-height:10px;font-weight:bold;color:#3b434b;letter-spacing:0.3px;transform:scaleX(0.9381);transform-origin:left top;">SITE ACCESS</div>
<div class="t" style="left:1227.2px;top:383.04px;font-size:10px;line-height:10px;font-weight:bold;color:#3b434b;letter-spacing:0.3px;transform:scaleX(0.9850);transform-origin:left top;">USER</div>
<div class="t" style="left:1227.2px;top:395.74px;font-size:10px;line-height:10px;font-weight:bold;color:#3b434b;letter-spacing:0.3px;transform:scaleX(0.9814);transform-origin:left top;">CREDENTIAL</div>
<div class="t" style="left:1227.2px;top:408.34px;font-size:10px;line-height:10px;font-weight:bold;color:#3b434b;letter-spacing:0.3px;transform:scaleX(1.0069);transform-origin:left top;">SUBMISSION</div>
<div class="abs" style="left:1322px;top:427px;width:18px;height:173px;background:#f1f1f1;"></div>
<svg class="abs" style="left:1326px;top:432px" width="11" height="7"><path d="M1 6l4.5-4.5L10 6z" fill="#9a9a9a"/></svg>
<div class="abs" style="left:1325px;top:444px;width:13px;height:17px;background:#c2c2c2;"></div>
<svg class="abs" style="left:1326px;top:587px" width="11" height="7"><path d="M1 1l4.5 4.5L10 1z" fill="#444"/></svg>
<div class="abs" style="left:575px;top:427px;width:748px;height:30px;background:#fef0d1;"></div>
<div class="abs" style="left:575px;top:457px;width:747px;height:1px;background:#cfd2d4;"></div>
<svg class="abs" style="left:583px;top:442px" width="11" height="7"><path d="M1 1l4.5 4.5L10 1" fill="none" stroke="#555" stroke-width="1"/></svg>
<div class="t" style="left:598.9px;top:437.89px;font-size:11px;line-height:11px;font-weight:normal;color:#3d454c;transform:scaleX(0.9679);transform-origin:left top;">Custom URL Categories</div>
<div class="abs" style="left:575px;top:458px;width:747px;height:22.5px;background:#ffffff;"></div>
<div class="abs" style="left:575px;top:480.5px;width:747px;height:1px;background:#e4e6e8;"></div>
<div class="abs" style="left:600px;top:460px;width:1px;height:19.5px;background:#d9dcde;"></div>
<div class="abs" style="left:1121px;top:460px;width:1px;height:19.5px;background:#d9dcde;"></div>
<div class="abs" style="left:1221px;top:460px;width:1px;height:19.5px;background:#d9dcde;"></div>
<div class="abs" style="left:581px;top:463.3px;width:13px;height:13.5px;border:1.8px solid #1b8bc3;border-radius:2px"></div>
<div class="t" style="left:606.3px;top:464.27px;font-size:11.5px;line-height:11.5px;font-weight:normal;color:#2f353a;transform:scaleX(0.9400);transform-origin:left top;">BlockCustomURL *</div>
<div class="t" style="left:1127.3px;top:464.27px;font-size:11.5px;line-height:11.5px;font-weight:normal;color:#2f353a;transform:scaleX(0.9400);transform-origin:left top;">block</div>
<div class="t" style="left:1227.3px;top:464.27px;font-size:11.5px;line-height:11.5px;font-weight:normal;color:#2f353a;transform:scaleX(0.9400);transform-origin:left top;">block</div>
<div class="abs" style="left:575px;top:481px;width:748px;height:30px;background:#fef0d1;"></div>
<div class="abs" style="left:575px;top:511px;width:747px;height:1px;background:#cfd2d4;"></div>
<svg class="abs" style="left:583px;top:496px" width="11" height="7"><path d="M1 1l4.5 4.5L10 1" fill="none" stroke="#555" stroke-width="1"/></svg>
<div class="t" style="left:598.9px;top:491.89px;font-size:11px;line-height:11px;font-weight:normal;color:#3d454c;transform:scaleX(0.9830);transform-origin:left top;">Pre-defined Categories</div>
<div class="abs" style="left:575px;top:511.5px;width:747px;height:22.5px;background:#edf3f6;"></div>
<div class="abs" style="left:575px;top:534.0px;width:747px;height:1px;background:#e4e6e8;"></div>
<div class="abs" style="left:600px;top:513.5px;width:1px;height:19.5px;background:#d9dcde;"></div>
<div class="abs" style="left:1121px;top:513.5px;width:1px;height:19.5px;background:#d9dcde;"></div>
<div class="abs" style="left:1221px;top:513.5px;width:1px;height:19.5px;background:#d9dcde;"></div>
<div class="abs" style="left:581px;top:516.8px;width:13px;height:13.5px;border:1.8px solid #1b8bc3;border-radius:2px"></div>
<div class="t" style="left:606.3px;top:517.77px;font-size:11.5px;line-height:11.5px;font-weight:normal;color:#2f353a;transform:scaleX(0.9400);transform-origin:left top;">abortion</div>
<div class="t" style="left:1127.3px;top:517.77px;font-size:11.5px;line-height:11.5px;font-weight:normal;color:#2f353a;transform:scaleX(0.9400);transform-origin:left top;">allow</div>
<div class="t" style="left:1227.3px;top:517.77px;font-size:11.5px;line-height:11.5px;font-weight:normal;color:#2f353a;transform:scaleX(0.9400);transform-origin:left top;">allow</div>
<div class="abs" style="left:575px;top:534.5px;width:747px;height:22.5px;background:#ffffff;"></div>
<div class="abs" style="left:575px;top:557.0px;width:747px;height:1px;background:#e4e6e8;"></div>
<div class="abs" style="left:600px;top:536.5px;width:1px;height:19.5px;background:#d9dcde;"></div>
<div class="abs" style="left:1121px;top:536.5px;width:1px;height:19.5px;background:#d9dcde;"></div>
<div class="abs" style="left:1221px;top:536.5px;width:1px;height:19.5px;background:#d9dcde;"></div>
<div class="abs" style="left:581px;top:539.8px;width:13px;height:13.5px;border:1.8px solid #1b8bc3;border-radius:2px"></div>
<div class="t" style="left:606.3px;top:540.77px;font-size:11.5px;line-height:11.5px;font-weight:normal;color:#2f353a;transform:scaleX(0.9400);transform-origin:left top;">abused-drugs</div>
<div class="t" style="left:1127.3px;top:540.77px;font-size:11.5px;line-height:11.5px;font-weight:normal;color:#2f353a;transform:scaleX(0.9400);transform-origin:left top;">allow</div>
<div class="t" style="left:1227.3px;top:540.77px;font-size:11.5px;line-height:11.5px;font-weight:normal;color:#2f353a;transform:scaleX(0.9400);transform-origin:left top;">allow</div>
<div class="abs" style="left:575px;top:557.5px;width:747px;height:22.5px;background:#edf3f6;"></div>
<div class="abs" style="left:575px;top:580.0px;width:747px;height:1px;background:#e4e6e8;"></div>
<div class="abs" style="left:600px;top:559.5px;width:1px;height:19.5px;background:#d9dcde;"></div>
<div class="abs" style="left:1121px;top:559.5px;width:1px;height:19.5px;background:#d9dcde;"></div>
<div class="abs" style="left:1221px;top:559.5px;width:1px;height:19.5px;background:#d9dcde;"></div>
<div class="abs" style="left:581px;top:562.8px;width:13px;height:13.5px;border:1.8px solid #1b8bc3;border-radius:2px"></div>
<div class="t" style="left:606.3px;top:563.77px;font-size:11.5px;line-height:11.5px;font-weight:normal;color:#2f353a;transform:scaleX(0.9400);transform-origin:left top;">adult</div>
<div class="t" style="left:1127.3px;top:563.77px;font-size:11.5px;line-height:11.5px;font-weight:normal;color:#2f353a;transform:scaleX(0.9400);transform-origin:left top;">allow</div>
<div class="t" style="left:1227.3px;top:563.77px;font-size:11.5px;line-height:11.5px;font-weight:normal;color:#2f353a;transform:scaleX(0.9400);transform-origin:left top;">allow</div>
<div class="abs" style="left:575px;top:580.5px;width:747px;height:19.5px;background:#ffffff;"></div>
<div class="abs" style="left:600px;top:582.5px;width:1px;height:16.5px;background:#d9dcde;"></div>
<div class="abs" style="left:1121px;top:582.5px;width:1px;height:16.5px;background:#d9dcde;"></div>
<div class="abs" style="left:1221px;top:582.5px;width:1px;height:16.5px;background:#d9dcde;"></div>
<div class="abs" style="left:581px;top:585.8px;width:13px;height:13.5px;border:1.8px solid #1b8bc3;border-radius:2px"></div>
<div class="t" style="left:606.3px;top:586.77px;font-size:11.5px;line-height:11.5px;font-weight:normal;color:#2f353a;transform:scaleX(0.9400);transform-origin:left top;">alcohol-and-tobacco</div>
<div class="t" style="left:1127.3px;top:586.77px;font-size:11.5px;line-height:11.5px;font-weight:normal;color:#2f353a;transform:scaleX(0.9400);transform-origin:left top;">allow</div>
<div class="t" style="left:1227.3px;top:586.77px;font-size:11.5px;line-height:11.5px;font-weight:normal;color:#2f353a;transform:scaleX(0.9400);transform-origin:left top;">allow</div>
<div class="abs" style="left:1322px;top:458px;width:1px;height:142px;background:#fdf0d3;"></div>
<div class="t" style="left:574.4px;top:607.68px;font-size:10.3px;line-height:10.3px;font-weight:normal;color:#8b9196;transform:scaleX(0.9549);transform-origin:left top;">* indicates a custom URL category, + indicates external dynamic list</div>
<div class="t" style="left:577.2px;top:626.19px;font-size:12.3px;line-height:12.3px;font-weight:normal;color:#1a9ad6;transform:scaleX(0.8701);transform-origin:left top;">Check URL Category</div>
<div class="abs" style="left:1193px;top:673px;width:75px;height:28px;background:#0ea5e6;border-radius:14px"></div>
<div class="t" style="left:1222.7px;top:681.18px;font-size:11.6px;line-height:11.6px;font-weight:bold;color:#ffffff;transform:scaleX(0.9545);transform-origin:left top;">OK</div>
<div class="abs" style="left:1274px;top:673px;width:75px;height:28px;background:#fff;border:1px solid #c0c4c8;border-radius:14px"></div>
<div class="t" style="left:1295.7px;top:681.18px;font-size:11.6px;line-height:11.6px;font-weight:normal;color:#4d555c;transform:scaleX(0.9115);transform-origin:left top;">Cancel</div>
</body></html>
